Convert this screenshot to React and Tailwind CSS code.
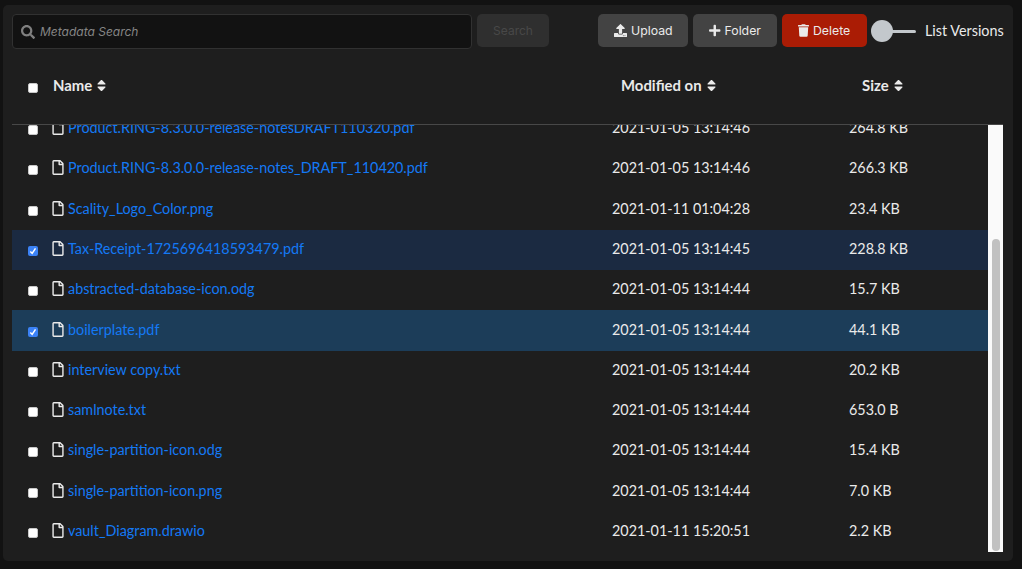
import React, { useState } from "react";
import { FaSearch, FaUpload, FaPlus, FaTrash, FaSort, FaRegFile } from "react-icons/fa";

const FILES = [
  ["Product.RING-8.3.0.0-release-notesDRAFT110320.pdf", "2021-01-05 13:14:46", "264.8 KB"],
  ["Product.RING-8.3.0.0-release-notes_DRAFT_110420.pdf", "2021-01-05 13:14:46", "266.3 KB"],
  ["Scality_Logo_Color.png", "2021-01-11 01:04:28", "23.4 KB"],
  ["Tax-Receipt-1725696418593479.pdf", "2021-01-05 13:14:45", "228.8 KB", "bg-[#1b2a41]"],
  ["abstracted-database-icon.odg", "2021-01-05 13:14:44", "15.7 KB"],
  ["boilerplate.pdf", "2021-01-05 13:14:44", "44.1 KB", "bg-[#1c3d59]"],
  ["interview copy.txt", "2021-01-05 13:14:44", "20.2 KB"],
  ["samlnote.txt", "2021-01-05 13:14:44", "653.0 B"],
  ["single-partition-icon.odg", "2021-01-05 13:14:44", "15.4 KB"],
  ["single-partition-icon.png", "2021-01-05 13:14:44", "7.0 KB"],
  ["vault_Diagram.drawio", "2021-01-11 15:20:51", "2.2 KB"],
];

function Checkbox({ checked, onClick }) {
  return (
    <button
      type="button"
      role="checkbox"
      aria-checked={checked}
      onClick={onClick}
      className={
        "flex size-[10px] shrink-0 items-center justify-center rounded-[2px] " +
        (checked ? "bg-[#3b82f6]" : "border border-[#c8c8c8] bg-white")
      }
    >
      {checked && (
        <svg viewBox="0 0 10 10" className="size-[10px]" fill="none" stroke="white" strokeWidth="1.5">
          <path d="M2.3 5.4 4.2 7.4 7.5 2.4" />
        </svg>
      )}
    </button>
  );
}

function ActionButton({ icon: Icon, label, className, iconClass }) {
  return (
    <button
      type="button"
      className={
        "flex h-[33px] items-center rounded-[5px] pl-4 font-[Inter,sans-serif] text-[12.3px] text-[#eaeaea] " +
        className
      }
    >
      <Icon className={iconClass} />
      <span className="pt-px">{label}</span>
    </button>
  );
}

function SortHeader({ label, className }) {
  return (
    <div className={"flex items-center gap-[5px] text-[14.9px] font-bold " + className}>
      {label}
      <FaSort className="h-[15px] w-[9px]" />
    </div>
  );
}

export default function App() {
  const [selected, setSelected] = useState([3, 5]);
  const toggle = (i) =>
    setSelected((s) => (s.includes(i) ? s.filter((n) => n !== i) : [...s, i]));

  return (
    <div className="h-[569px] w-[1022px] overflow-hidden bg-[#121212] pt-[5px] pl-[3px] font-[Lato,sans-serif] text-[14.35px] leading-5 text-[#eaeaea]">
      <div className="h-[556px] w-[1010px] rounded-[5px] bg-[#1e1e1e] pt-[9px] pl-[9px]">
        <div className="flex h-[35px] items-start">
          <div className="flex h-[35px] w-[460px] items-center rounded-[4px] border border-[#313131] bg-[#121212] pl-2">
            <FaSearch className="size-[14px] text-[#808080]" />
            <span className="ml-[5px] font-[Inter,sans-serif] text-[12px] text-[#858585] italic">Metadata Search</span>
          </div>
          <button type="button" disabled className="ml-[5px] h-[33px] w-[72px] rounded-[5px] bg-[#2f2f2f] pt-px font-[Inter,sans-serif] text-[12px] text-[#484848]">
            Search
          </button>
          <ActionButton icon={FaUpload} label="Upload" className="ml-[49px] w-[90px] bg-[#434343]" iconClass="mr-1 size-[13px]" />
          <ActionButton icon={FaPlus} label="Folder" className="ml-[5px] w-[84px] bg-[#434343]" iconClass="mr-1 h-[13px] w-[11.5px]" />
          <ActionButton icon={FaTrash} label="Delete" className="ml-[5px] w-[85px] bg-[#aa1c05]" iconClass="mr-1 h-[13px] w-[11px]" />
          <div className="ml-1 flex h-[34px] items-center">
            <span className="size-[22px] rounded-full bg-[#c3c8cc]" />
            <span className="-ml-px h-[3px] w-6 rounded-r-full bg-[#c3c8cc]" />
            <span className="ml-[9px] whitespace-nowrap">List Versions</span>
          </div>
        </div>

        <div className="flex h-[76px] w-[991px] border-b border-[#484848] pt-[26px]">
          <div className="w-[41px] pt-[8px] pl-4">
            <Checkbox checked={false} />
          </div>
          <SortHeader label="Name" className="h-5 w-[568px]" />
          <SortHeader label="Modified on" className="h-5 w-[241px]" />
          <SortHeader label="Size" className="h-5" />
        </div>

        <div className="flex h-[427px] w-[991px] overflow-hidden">
          <div className="-mt-[16.15px] w-[976px]">
            {FILES.map(([name, date, size, tint], i) => (
              <div key={name} className={"flex h-[40.3px] pt-[9.25px] " + (tint || "")}>
                <div className="w-10 pt-[7px] pl-4">
                  <Checkbox checked={selected.includes(i)} onClick={() => toggle(i)} />
                </div>
                <div className="flex h-5 w-[560px] items-center">
                  <FaRegFile className="mb-px h-[15px] w-3" />
                  <a href="#" className="ml-1 text-[#1479f5]">{name}</a>
                </div>
                <div className="w-[237px]">{date}</div>
                <div>{size}</div>
              </div>
            ))}
          </div>
          <div className="h-[427px] w-[15px] bg-[#fafafa] pt-[114px] pl-1">
            <div className="h-[312px] w-2 rounded-full bg-[#c1c1c1]" />
          </div>
        </div>
      </div>
    </div>
  );
}
